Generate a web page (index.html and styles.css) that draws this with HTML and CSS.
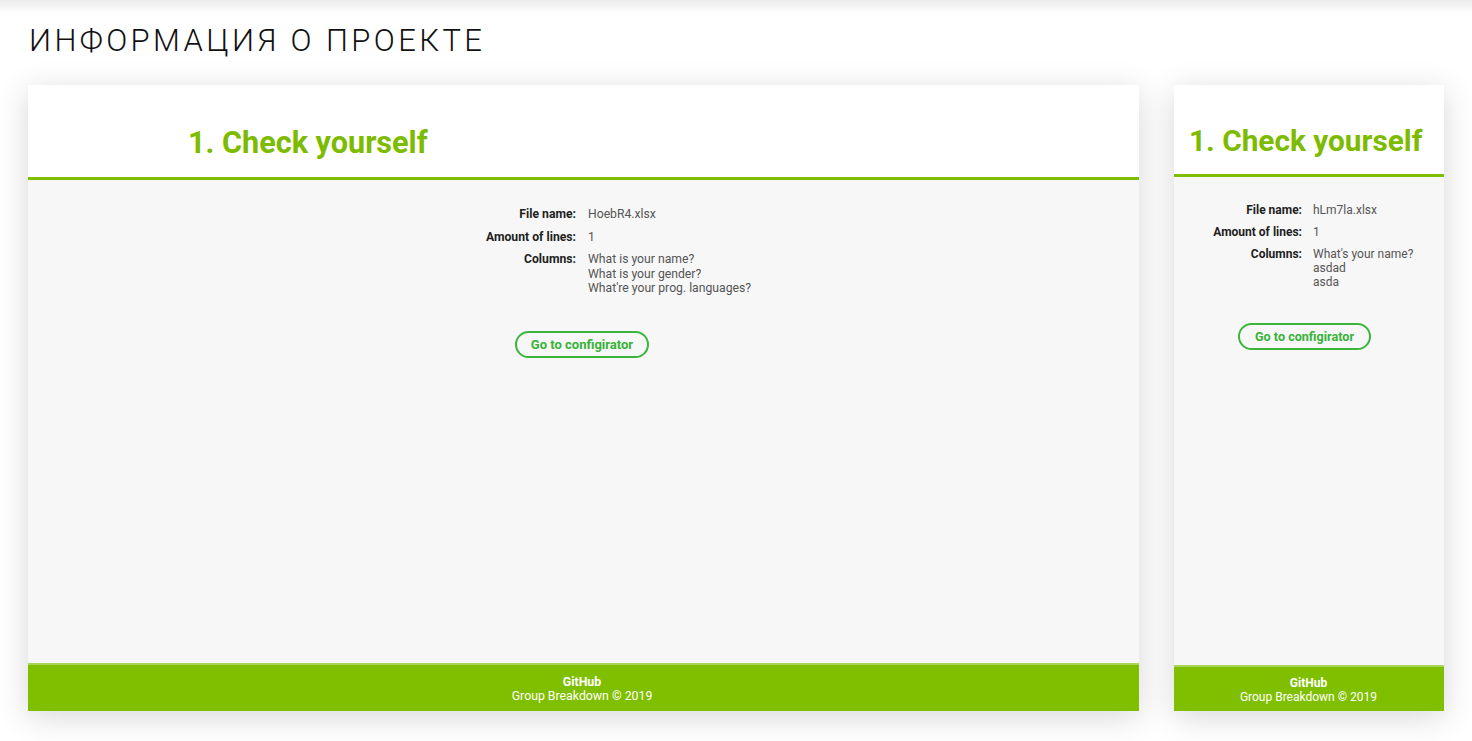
FILE: index.html
```html
<!DOCTYPE html>
<html lang="ru">
<head>
<meta charset="utf-8">
<title>Информация о проекте</title>
<link rel="stylesheet" href="styles.css">
</head>
<body>
<div class="page">
  <h2 class="page-title">ИНФОРМАЦИЯ О ПРОЕКТЕ</h2>
  <div class="shots">
    <section class="card card--wide">
      <header class="card-head"><h1 class="card-title">1. Check yourself</h1></header>
      <main class="card-body">
        <dl class="info">
          <dt>File name:</dt><dd>HoebR4.xlsx</dd>
          <dt>Amount of lines:</dt><dd>1</dd>
          <dt>Columns:</dt><dd>What is your name?<br>What is your gender?<br>What're your prog. languages?</dd>
        </dl>
        <div class="actions"><button class="btn">Go to configirator</button></div>
      </main>
      <footer class="card-foot"><strong>GitHub</strong><span>Group Breakdown © 2019</span></footer>
    </section>
    <section class="card card--narrow">
      <header class="card-head"><h1 class="card-title">1. Check yourself</h1></header>
      <main class="card-body">
        <dl class="info">
          <dt>File name:</dt><dd>hLm7la.xlsx</dd>
          <dt>Amount of lines:</dt><dd>1</dd>
          <dt>Columns:</dt><dd>What's your name?<br>asdad<br>asda</dd>
        </dl>
        <div class="actions"><button class="btn">Go to configirator</button></div>
      </main>
      <footer class="card-foot"><strong>GitHub</strong><span>Group Breakdown © 2019</span></footer>
    </section>
  </div>
</div>
</body>
</html>
```
FILE: styles.css
```css
* { box-sizing: border-box; }
html, body { margin: 0; padding: 0; }
body {
  width: 1472px;
  height: 741px;
  overflow: hidden;
  background: linear-gradient(#ececec 0, #fff 14px) no-repeat #fff;
  font-family: Roboto, "Liberation Sans", Arial, sans-serif;
}
.page { padding: 23px 0 0 28px; }
.page-title {
  margin: 0 0 26px 1px;
  font-size: 31px;
  line-height: 36px;
  font-weight: 300;
  letter-spacing: 3.4px;
  color: #111;
}
.shots { display: flex; gap: 35px; align-items: flex-start; }
.card {
  height: 626px;
  display: flex;
  flex-direction: column;
  background: #f7f7f7;
  box-shadow: 0 6px 30px rgba(0,0,0,0.16);
}
.card--wide { width: 1111px; }
.card--narrow { width: 270px; }
.card-head {
  background: #fff;
  border-bottom: 3px solid #7fbd00;
}
.card--wide .card-head { height: 95px; padding: 40px 0 0 160px; }
.card--narrow .card-head { height: 92px; padding: 38px 0 0 15px; }
.card-title {
  margin: 0;
  font-size: 30.6px;
  line-height: 36px;
  font-weight: 700;
  color: #7cbb00;
}
.card--narrow .card-title { font-size: 29.8px; }
.card-body { flex: 1; }
.card--wide .card-body { padding: 27px 3px 0 0; }
.card--narrow .card-body { padding: 26px 3px 0 0; }
.info {
  margin: 0;
  display: grid;
  grid-template-columns: 1fr 1fr;
  column-gap: 12px;
  row-gap: 8px;
  font-size: 12.2px;
  line-height: 14.5px;
}
.card--narrow .info { column-gap: 11px; line-height: 14px; font-size: 12px; }
.info dt { text-align: right; font-weight: 700; color: #1e1e1e; }
.info dd { margin: 0; color: #555; }
.actions { display: flex; justify-content: center; }
.card--wide .actions { padding-top: 35px; }
.card--narrow .actions { padding: 34px 6px 0 0; }
.btn {
  height: 27px;
  padding: 0 14px;
  border: 2px solid #3cb53c;
  border-radius: 14px;
  background: transparent;
  font-family: inherit;
  font-size: 13px;
  font-weight: 700;
  color: #38b238;
}
.card--narrow .btn { font-size: 12.6px; padding: 0 15px; }
.card-foot {
  display: flex;
  flex-direction: column;
  align-items: center;
  background: #80bf00;
  border-top: 2px solid #a9d45a;
  color: #fff;
  font-size: 12.3px;
  line-height: 14px;
}
.card--wide .card-foot { height: 48px; padding: 10px 3px 0 0; }
.card--narrow .card-foot { height: 46px; padding: 9px 1px 0 0; font-size: 12px; }
```
